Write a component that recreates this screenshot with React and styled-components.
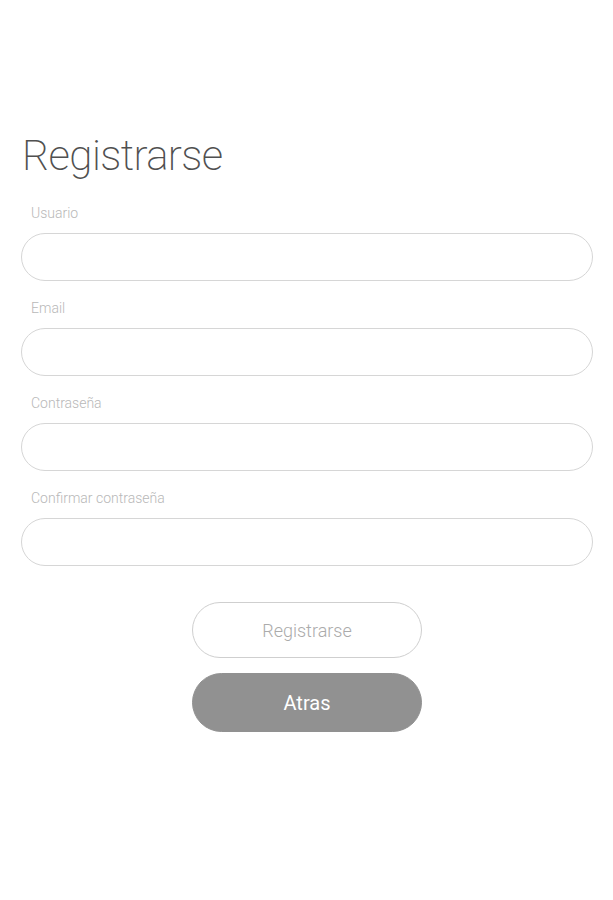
import React from "react";
import styled, { createGlobalStyle } from "styled-components";

const Global = createGlobalStyle`
  html, body { margin: 0; padding: 0; background: #fff; }
  body { font-family: Roboto, "Liberation Sans", sans-serif; }
  * { box-sizing: border-box; }
`;

const Page = styled.div`
  width: 613px;
  min-height: 900px;
  padding: 128px 20px 0 21px;
  display: flex;
  flex-direction: column;
`;

const Title = styled.h1`
  margin: 0 0 0 1px;
  font-family: Roboto, "Liberation Sans", sans-serif;
  font-weight: 200;
  font-size: 42px;
  letter-spacing: -0.6px;
  line-height: 56px;
  color: #505050;
`;

const Form = styled.div`
  display: flex;
  flex-direction: column;
  margin-top: 19px;
`;

const Field = styled.div`
  display: flex;
  flex-direction: column;
  margin-bottom: 17px;
`;

const Label = styled.label`
  font-weight: 300;
  font-size: 14px;
  line-height: 20px;
  color: #b8b8b8;
  padding-left: 10px;
  margin-bottom: 10px;
`;

const Input = styled.input`
  width: 572px;
  height: 48px;
  border: 1px solid #d6d6d6;
  border-radius: 24px;
  background: #fff;
  outline: none;
  padding: 0 20px;
  font-family: inherit;
  font-size: 16px;
`;

const Actions = styled.div`
  display: flex;
  flex-direction: column;
  align-items: center;
  gap: 15px;
  margin-top: 19px;
`;

const Button = styled.button`
  width: 230px;
  height: ${(p) => (p.$filled ? "59px" : "56px")};
  border-radius: 30px;
  border: 1px solid ${(p) => (p.$filled ? "#919191" : "#cfcfcf")};
  background: ${(p) => (p.$filled ? "#919191" : "#fff")};
  color: ${(p) => (p.$filled ? "#fff" : "#ababab")};
  font-family: Roboto, "Liberation Sans", sans-serif;
  font-weight: ${(p) => (p.$filled ? 400 : 300)};
  font-size: ${(p) => (p.$filled ? "20px" : "18px")};
  cursor: pointer;
`;

const fields = ["Usuario", "Email", "Contraseña", "Confirmar contraseña"];

export default function App() {
  return (
    <>
      <Global />
      <Page>
        <Title>Registrarse</Title>
        <Form>
          {fields.map((f) => (
            <Field key={f}>
              <Label>{f}</Label>
              <Input type={f.startsWith("Contr") || f.startsWith("Confirmar") ? "password" : "text"} />
            </Field>
          ))}
        </Form>
        <Actions>
          <Button>Registrarse</Button>
          <Button $filled>Atras</Button>
        </Actions>
      </Page>
    </>
  );
}
